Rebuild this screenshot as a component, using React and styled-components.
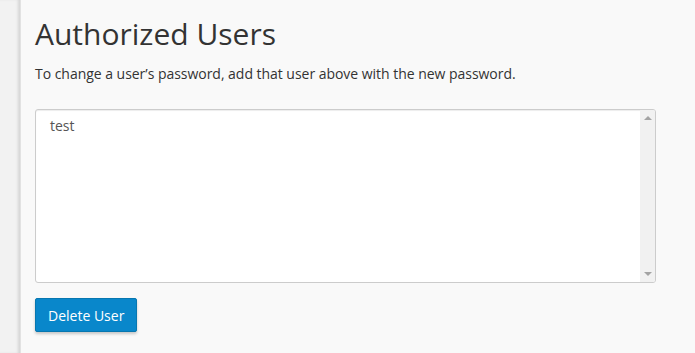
import styled, { createGlobalStyle } from "styled-components";

const GlobalStyle = createGlobalStyle`
  html, body {
    margin: 0;
    padding: 0;
    background: #f9f9f9;
    font-family: "Open Sans", "Liberation Sans", sans-serif;
    color: #333;
  }
`;

const Page = styled.div`
  display: flex;
  min-height: 353px;
`;

const Sidebar = styled.div`
  width: 20px;
  flex-shrink: 0;
  background: #f2f2f2;
  box-shadow: inset -3px 0 3px -1px rgba(0, 0, 0, 0.12);
  border-right: 1px solid #e2e2e2;
`;

const Main = styled.div`
  flex: 1;
  padding: 14px 39px 0 14px;
`;

const Title = styled.h2`
  margin: 0 0 10px;
  font-size: 30px;
  font-weight: 400;
  line-height: 40px;
  color: #333;
`;

const Hint = styled.p`
  margin: 0 0 25px;
  font-size: 14px;
  line-height: 20px;
  letter-spacing: -0.03px;
  color: #333;
`;

const Field = styled.div`
  display: flex;
  box-sizing: border-box;
  width: 621px;
  height: 174px;
  margin: 0 0 15px;
  border: 1px solid #cccccc;
  border-radius: 3px;
  background: #fff;
  overflow: hidden;
  box-shadow: inset 0 1px 1px rgba(0, 0, 0, 0.075);
`;

const UserList = styled.textarea`
  flex: 1;
  box-sizing: border-box;
  padding: 6px 14px;
  border: none;
  background: transparent;
  font-family: "Open Sans", "Liberation Sans", sans-serif;
  font-size: 14px;
  line-height: 20px;
  color: #555;
  resize: none;
  overflow: hidden;
  outline: none;
`;

const ScrollRail = styled.div`
  width: 15px;
  flex-shrink: 0;
  background: #f1f1f1;
  display: flex;
  flex-direction: column;
  justify-content: space-between;
  align-items: center;
  padding: 6px 0;
  box-sizing: border-box;
`;

const Arrow = styled.span`
  width: 0;
  height: 0;
  border-left: 4px solid transparent;
  border-right: 4px solid transparent;
  ${(p) =>
    p.$down
      ? "border-top: 4px solid #a3a3a3;"
      : "border-bottom: 4px solid #a3a3a3;"}
`;

const Button = styled.button`
  box-sizing: border-box;
  height: 34px;
  padding: 0 12px;
  border: 1px solid #0777b0;
  border-radius: 2px;
  background: ${(p) => (p.$primary ? "#0987cb" : "#fff")};
  color: #fff;
  font-family: "Open Sans", "Liberation Sans", sans-serif;
  font-size: 14px;
  box-shadow: 0 2px 3px rgba(0, 0, 0, 0.2);
  cursor: pointer;
`;

export default function App() {
  return (
    <>
      <GlobalStyle />
      <Page>
        <Sidebar />
        <Main>
          <Title>Authorized Users</Title>
          <Hint>To change a user’s password, add that user above with the new password.</Hint>
          <Field>
            <UserList readOnly value="test" />
            <ScrollRail>
              <Arrow />
              <Arrow $down />
            </ScrollRail>
          </Field>
          <Button $primary>Delete User</Button>
        </Main>
      </Page>
    </>
  );
}
